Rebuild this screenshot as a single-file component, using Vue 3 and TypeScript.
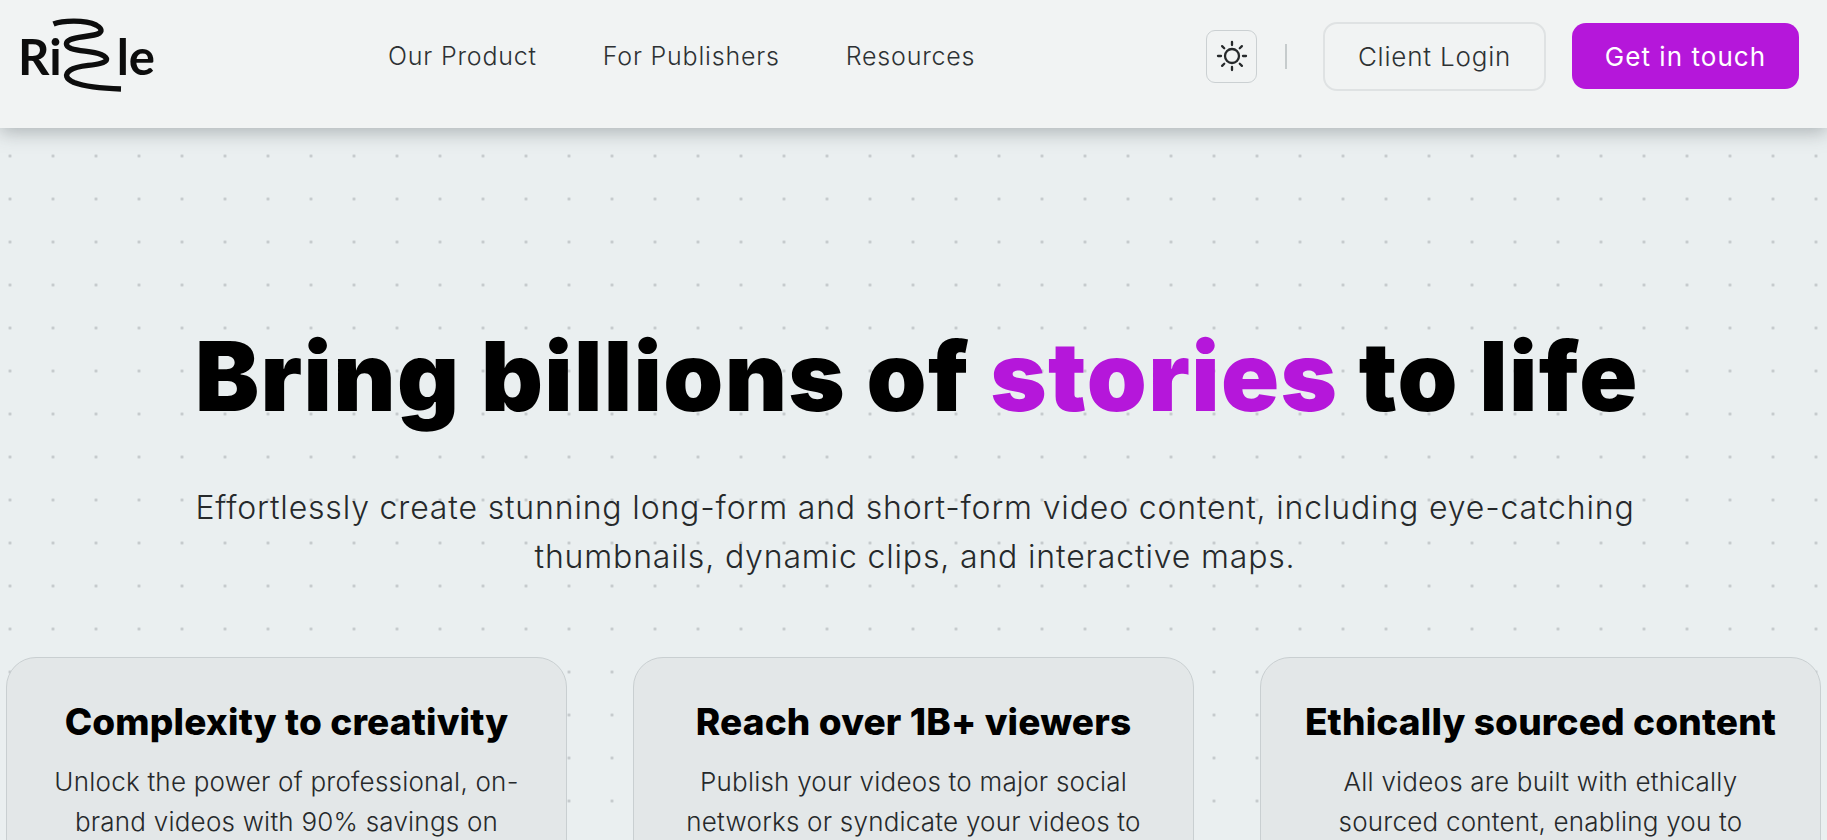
<script setup lang="ts">
interface Card { title: string; lines: string[] }
const navItems: string[] = ['Our Product', 'For Publishers', 'Resources']
const cards: Card[] = [
  { title: 'Complexity to creativity', lines: ['Unlock the power of professional, on-', 'brand videos with 90% savings on'] },
  { title: 'Reach over 1B+ viewers', lines: ['Publish your videos to major social', 'networks or syndicate your videos to'] },
  { title: 'Ethically sourced content', lines: ['All videos are built with ethically', 'sourced content, enabling you to'] },
]
const rays: number[] = [0, 45, 90, 135, 180, 225, 270, 315]
</script>

<template>
  <div class="page">
    <header class="header">
      <div class="logo">
        <span class="logo-text">Ri</span>
        <span class="logo-gap"></span>
        <span class="logo-text">le</span>
        <svg class="squiggle" width="150" height="100" viewBox="0 0 150 100" fill="none">
          <path
            d="M53.5 24 C62 20.5 85 19.5 96 25 C103 29 103 33 94 35 C85 37 76 37 70.5 39.5 C65 42 65 46 71 48.5 C80 51.5 92 51 101 54.5 C109 58 108 61.5 100 63.5 C90 66 77 65.5 70.5 70 C64 74.5 66 79 74 82.5 C86 87 105 88.5 121 89"
            stroke="#0d0d0d" stroke-width="5.4"
          />
        </svg>
      </div>
      <nav class="nav">
        <a v-for="item in navItems" :key="item" class="nav-link">{{ item }}</a>
      </nav>
      <div class="actions">
        <button class="theme" aria-label="Toggle theme">
          <svg width="32" height="32" viewBox="0 0 32 32" fill="none" stroke="#26292b" stroke-width="2.3" stroke-linecap="round">
            <circle cx="16" cy="16" r="7" />
            <line v-for="r in rays" :key="r" x1="16" y1="2" x2="16" y2="5" :transform="`rotate(${r} 16 16)`" />
          </svg>
        </button>
        <span class="divider"></span>
        <button class="login">Client Login</button>
        <button class="cta">Get in touch</button>
      </div>
    </header>

    <main class="hero">
      <h1 class="headline">Bring billions of <span class="accent">stories</span> to life</h1>
      <p class="sub">
        <span>Effortlessly create stunning long-form and short-form video content, including eye-catching</span>
        <span>thumbnails, dynamic clips, and interactive maps.</span>
      </p>
      <section class="cards">
        <article v-for="card in cards" :key="card.title" class="card">
          <h2 class="card-title">{{ card.title }}</h2>
          <p class="card-body">
            <span v-for="line in card.lines" :key="line">{{ line }}</span>
          </p>
        </article>
      </section>
    </main>
  </div>
</template>

<style>
html, body { margin: 0; height: 840px; overflow: hidden; }
</style>

<style scoped>
.page {
  height: 840px;
  overflow: hidden;
  font-family: Inter, "Liberation Sans", sans-serif;
  background-color: #eaeff0;
  background-image: radial-gradient(circle at center, #c2c7c9 0, #c2c7c9 1.1px, transparent 1.8px);
  background-size: 43px 43px;
  background-position: -11.5px 134.5px;
}
.header {
  height: 128px;
  box-sizing: border-box;
  display: flex;
  align-items: center;
  padding: 0 28px 16px 18px;
  background: #f1f3f3;
  box-shadow: 0 4px 18px rgba(60, 70, 75, 0.36);
  position: relative;
}
.logo {
  width: 370px;
  display: flex;
  align-items: center;
  position: relative;
  height: 100px;
  flex: none;
}
.logo-text {
  font-family: Lato, sans-serif;
  font-weight: 700;
  font-size: 49px;
  line-height: 1;
  color: #0d0d0d;
}
.logo-gap { width: 55px; }
.squiggle { position: absolute; left: -18px; top: -6px; }
.nav { display: flex; gap: 66px; }
.nav-link {
  font-size: 25px;
  font-weight: 300;
  color: #2d3133;
  letter-spacing: 0.8px;
}
.actions { margin-left: auto; display: flex; align-items: center; }
.theme {
  width: 51px;
  height: 53px;
  padding: 0;
  display: flex;
  align-items: center;
  justify-content: center;
  background: transparent;
  border: 1px solid #cbd0d2;
  border-radius: 9px;
}
.divider { width: 2px; height: 25px; background: #c6cbcc; margin: 0 36px 0 28px; }
.login, .cta {
  font-family: inherit;
  font-size: 26px;
  border-radius: 14px;
  padding: 0;
}
.login {
  width: 223px;
  height: 69px;
  background: transparent;
  border: 2px solid #dfe2e3;
  color: #2d3133;
  font-weight: 300;
  margin-right: 26px;
  letter-spacing: 0.8px;
}
.cta {
  width: 227px;
  height: 66px;
  background: #b517da;
  border: none;
  color: #fff;
  font-weight: 400;
  letter-spacing: 1.05px;
}
.hero { text-align: center; padding: 0 6px; }
.headline {
  margin: 190px 0 0;
  padding-left: 7px;
  font-size: 96px;
  line-height: 116px;
  font-weight: 900;
  color: #000;
  letter-spacing: 1.35px;
  white-space: nowrap;
}
.accent { color: #b517da; }
.sub {
  margin: 49px 0 0;
  padding-left: 3px;
  font-size: 32px;
  line-height: 49px;
  font-weight: 300;
  color: #26292b;
  letter-spacing: 0.84px;
  white-space: nowrap;
}
.sub span, .card-body span { display: block; }
.cards {
  margin-top: 76px;
  display: grid;
  grid-template-columns: repeat(3, 1fr);
  column-gap: 66px;
}
.card {
  background: #e3e7e8;
  border: 1px solid #c9cfd1;
  border-radius: 30px;
  height: 300px;
  padding-top: 41px;
  box-sizing: border-box;
}
.card-title {
  margin: 0;
  font-size: 37px;
  line-height: 46px;
  font-weight: 800;
  letter-spacing: 0.15px;
  color: #000;
}
.card-body {
  margin: 17px 0 0;
  font-size: 26px;
  line-height: 40px;
  font-weight: 300;
  letter-spacing: 0.22px;
  color: #26292b;
  white-space: nowrap;
}
</style>
